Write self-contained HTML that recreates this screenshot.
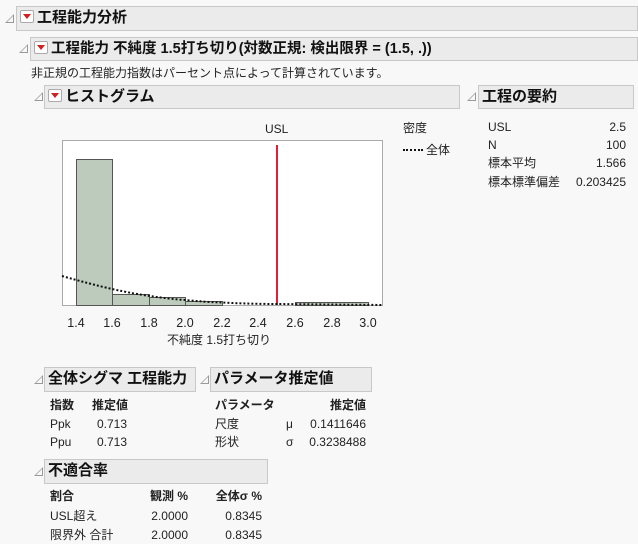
<!DOCTYPE html>
<html><head><meta charset="utf-8"><style>
body{margin:0;width:638px;height:544px;background:#f8f8f8;font-family:"Liberation Sans","Noto Sans CJK JP",sans-serif;font-size:12px;color:#222;position:relative;overflow:hidden}
.a{position:absolute;white-space:nowrap;line-height:16px;height:16px}
.hd{position:absolute;background:#ebebeb;border:1px solid #c8c8c8;box-sizing:border-box;font-weight:bold;font-size:15px;color:#111;padding-left:3px;line-height:22px;white-space:nowrap}
.tri{position:absolute;width:0;height:0;border-left:9px solid transparent;border-bottom:9px solid #999}
.tri:after{content:"";position:absolute;left:-7px;top:2px;border-left:6px solid transparent;border-bottom:6px solid #f8f8f8}
.mb{display:inline-block;width:12px;height:11px;border:1px solid #aaa;background:#fff;border-radius:2px;vertical-align:-1px;margin-right:3px;position:relative}
.mb:after{content:"";position:absolute;left:2px;top:3px;border-left:4px solid transparent;border-right:4px solid transparent;border-top:5px solid #d02020}
.r{text-align:right}
.b{font-weight:bold}
</style></head><body>
<div class="tri" style="left:5px;top:14px"></div>
<div class="hd" style="left:16px;top:6px;width:622px;height:25px"><span class="mb"></span>工程能力分析</div>
<div class="tri" style="left:19px;top:44px"></div>
<div class="hd" style="left:30px;top:37px;width:608px;height:24px;font-size:14.5px"><span class="mb"></span>工程能力 不純度 1.5打ち切り(対数正規: 検出限界 = (1.5, .))</div>
<div class="a" style="left:31px;top:65px">非正規の工程能力指数はパーセント点によって計算されています。</div>
<div class="tri" style="left:34px;top:92px"></div>
<div class="hd" style="left:44px;top:85px;width:416px;height:24px"><span class="mb"></span>ヒストグラム</div>
<div class="tri" style="left:467px;top:92px"></div>
<div class="hd" style="left:478px;top:85px;width:156px;height:24px">工程の要約</div>
<div class="a" style="left:265px;top:121px">USL</div>
<div class="a" style="left:403px;top:120px">密度</div>
<div class="a" style="left:403px;top:149px;width:20px;height:0;border-top:2px dotted #111"></div>
<div class="a" style="left:426px;top:142px">全体</div>
<svg class="a" style="left:0;top:0;height:544px" width="638" height="544">
<rect x="62.5" y="140.5" width="320" height="165" fill="#fff" stroke="#aaa"/>
<g fill="#bccbbc" stroke="#555">
<rect x="76.5" y="159.5" width="36" height="146"/>
<rect x="112.5" y="294.5" width="37" height="11"/>
<rect x="149.5" y="297.5" width="36" height="8"/>
<rect x="185.5" y="301.5" width="37" height="4"/>
<rect x="295.5" y="302.5" width="73" height="3"/>
</g>
<line x1="277" y1="145" x2="277" y2="305" stroke="#e0203a" stroke-width="2"/>
<path d="M62 276 Q90 284 112 289 Q135 294 150 296 Q170 299 185 300 Q205 302 222 302.5 Q250 304 277 304 L382 305" fill="none" stroke="#111" stroke-width="2" stroke-dasharray="2,2"/>
<g font-size="12.5" fill="#222" text-anchor="middle" font-family="Liberation Sans">
<text x="76" y="327">1.4</text><text x="112" y="327">1.6</text><text x="149" y="327">1.8</text><text x="185" y="327">2.0</text><text x="222" y="327">2.2</text><text x="258" y="327">2.4</text><text x="295" y="327">2.6</text><text x="332" y="327">2.8</text><text x="368" y="327">3.0</text>
</g>
</svg>
<div class="a" style="left:167px;top:332px">不純度 1.5打ち切り</div>
<div class="a" style="left:488px;top:119px">USL</div><div class="a r" style="left:560px;top:119px;width:66px">2.5</div>
<div class="a" style="left:488px;top:137px">N</div><div class="a r" style="left:560px;top:137px;width:66px">100</div>
<div class="a" style="left:488px;top:155px">標本平均</div><div class="a r" style="left:560px;top:155px;width:66px">1.566</div>
<div class="a" style="left:488px;top:174px">標本標準偏差</div><div class="a r" style="left:560px;top:174px;width:66px">0.203425</div>

<div class="tri" style="left:34px;top:375px"></div>
<div class="hd" style="left:44px;top:367px;width:152px;height:25px">全体シグマ 工程能力</div>
<div class="tri" style="left:200px;top:375px"></div>
<div class="hd" style="left:210px;top:367px;width:162px;height:25px">パラメータ推定値</div>
<div class="a b" style="left:50px;top:397px">指数</div><div class="a b" style="left:92px;top:397px">推定値</div>
<div class="a" style="left:50px;top:416px">Ppk</div><div class="a r" style="left:80px;top:416px;width:47px">0.713</div>
<div class="a" style="left:50px;top:434px">Ppu</div><div class="a r" style="left:80px;top:434px;width:47px">0.713</div>
<div class="a b" style="left:215px;top:397px">パラメータ</div><div class="a b r" style="left:300px;top:397px;width:66px">推定値</div>
<div class="a" style="left:215px;top:416px">尺度</div><div class="a" style="left:286px;top:416px">μ</div><div class="a r" style="left:300px;top:416px;width:66px">0.1411646</div>
<div class="a" style="left:215px;top:434px">形状</div><div class="a" style="left:286px;top:434px">σ</div><div class="a r" style="left:300px;top:434px;width:66px">0.3238488</div>

<div class="tri" style="left:34px;top:467px"></div>
<div class="hd" style="left:44px;top:459px;width:224px;height:25px">不適合率</div>
<div class="a b" style="left:50px;top:488px">割合</div><div class="a b r" style="left:120px;top:488px;width:68px">観測 %</div><div class="a b r" style="left:200px;top:488px;width:62px">全体σ %</div>
<div class="a" style="left:50px;top:508px">USL超え</div><div class="a r" style="left:120px;top:508px;width:68px">2.0000</div><div class="a r" style="left:200px;top:508px;width:62px">0.8345</div>
<div class="a" style="left:50px;top:527px">限界外 合計</div><div class="a r" style="left:120px;top:527px;width:68px">2.0000</div><div class="a r" style="left:200px;top:527px;width:62px">0.8345</div>
</body></html>
